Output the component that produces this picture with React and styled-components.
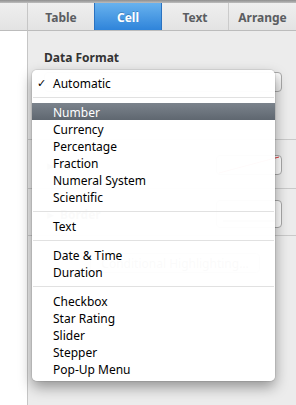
import React from 'react';
import styled, { createGlobalStyle, css } from 'styled-components';

const GlobalStyle = createGlobalStyle`
  html, body {
    margin: 0;
    padding: 0;
    height: 100%;
    overflow: hidden;
  }
  body {
    font-family: "Noto Sans", "DejaVu Sans", sans-serif;
    font-size: 12px;
    color: #000;
    background: #ececec;
  }
`;

const Window = styled.div`
  width: 296px;
  height: 405px;
  display: flex;
  flex-direction: column;
  background: #ececec;
`;

const TopStrip = styled.div`
  height: 3px;
  background: linear-gradient(to bottom, #8f8f8f, #bdbdbd);
`;

const Main = styled.div`
  flex: 1;
  display: grid;
  grid-template-columns: 28px 1fr;
  grid-template-rows: 28px 1fr;
`;

const Corner = styled.div`
  background: linear-gradient(to bottom, #efefef, #e3e3e3);
  border-right: 1px solid #c6c6c6;
  border-bottom: 1px solid #bcbcbc;
`;

const TabBar = styled.div`
  display: grid;
  grid-template-columns: repeat(4, 1fr);
  background: linear-gradient(to bottom, #efefef, #e3e3e3);
  border-bottom: 1px solid #bcbcbc;
`;

const Tab = styled.div`
  display: flex;
  align-items: center;
  justify-content: center;
  padding-top: 1px;
  font-weight: bold;
  font-size: 12px;
  color: #5b5d61;
  border-right: 1px solid #cbcbcb;
  &:last-child {
    border-right: none;
  }
  ${p =>
    p.$active &&
    css`
      color: #fff;
      background: linear-gradient(to bottom, #68b2ee, #2f84da);
      border-right: 1px solid #2a72c0;
      border-left: 1px solid #2a72c0;
      margin-left: -1px;
      text-shadow: 0 -1px 0 rgba(0, 0, 0, 0.2);
    `}
`;

const Canvas = styled.div`
  background: #fff;
  border-right: 1px solid #c6c6c6;
`;

const Inspector = styled.div`
  position: relative;
  background: #ececec;
  display: flex;
  flex-direction: column;
`;

const Section = styled.div`
  padding: 0 14px 0 16px;
  display: flex;
  flex-direction: column;
`;

const Heading = styled.div`
  font-weight: bold;
  color: #333;
  line-height: 16px;
  margin-top: 19px;
`;

const PopupButton = styled.div`
  margin-top: 6px;
  height: 18px;
  border: 1px solid #a9a9a9;
  border-radius: 4px;
  background: linear-gradient(to bottom, #fdfdfd, #ececec);
  margin-bottom: 47px;
`;

const Divider = styled.div`
  height: 1px;
  background: #c9c9c9;
`;

const DisclosureRow = styled.div`
  display: flex;
  align-items: center;
  height: ${p => p.$h}px;
  margin: ${p => p.$m};
  color: #333;
  font-weight: bold;
`;

const Arrow = styled.span`
  font-size: 9px;
  color: #666;
  width: 13px;
  margin-left: 3px;
`;

const Well = styled.div`
  margin-left: auto;
  width: 66px;
  height: 100%;
  box-sizing: border-box;
  border: 1px solid #a9a9a9;
  border-radius: 4px;
  background: #fff;
  overflow: hidden;
  svg {
    display: block;
  }
`;

const HighlightButton = styled.div`
  margin: 17px 0 0 46px;
  width: 170px;
  height: 20px;
  box-sizing: border-box;
  border: 1px solid #b0b0b0;
  border-radius: 4px;
  background: linear-gradient(to bottom, #fdfdfd, #eaeaea);
  color: #333;
  display: flex;
  align-items: center;
  justify-content: center;
`;

const Menu = styled.div`
  position: absolute;
  left: 4px;
  top: 39px;
  width: 243px;
  box-sizing: border-box;
  padding: 4px 0;
  background: rgba(255, 255, 255, 0.975);
  border-radius: 5px;
  box-shadow: 0 0 0 1px rgba(0, 0, 0, 0.07), 0 6px 14px rgba(0, 0, 0, 0.38);
`;

const Item = styled.div`
  display: flex;
  align-items: flex-start;
  height: 17px;
  box-sizing: border-box;
  padding-top: 3px;
  line-height: 14px;
  color: ${p => (p.$selected ? '#fff' : '#000')};
  background: ${p =>
    p.$selected ? 'linear-gradient(to bottom, #7b838c, #5f6770)' : 'transparent'};
`;

const CheckSlot = styled.span`
  width: 21px;
  padding-left: 5px;
  box-sizing: border-box;
  font-family: "DejaVu Sans", sans-serif;
  font-size: 11px;
  font-weight: bold;
`;

const Separator = styled.div`
  height: 12px;
  display: flex;
  align-items: center;
  padding: 0 1px;
  &::after {
    content: '';
    flex: 1;
    height: 1px;
    background: #e1e1e1;
  }
`;

const groups = [
  ['Automatic'],
  ['Number', 'Currency', 'Percentage', 'Fraction', 'Numeral System', 'Scientific'],
  ['Text'],
  ['Date & Time', 'Duration'],
  ['Checkbox', 'Star Rating', 'Slider', 'Stepper', 'Pop-Up Menu'],
];

function FormatMenu({ checked, selected }) {
  return (
    <Menu>
      {groups.map((group, i) => (
        <React.Fragment key={i}>
          {i > 0 && <Separator />}
          {group.map(label => (
            <Item key={label} $selected={label === selected}>
              <CheckSlot>{label === checked ? '✓' : ''}</CheckSlot>
              {label}
            </Item>
          ))}
        </React.Fragment>
      ))}
    </Menu>
  );
}

export default function App() {
  const tabs = ['Table', 'Cell', 'Text', 'Arrange'];
  return (
    <>
      <GlobalStyle />
      <Window>
        <TopStrip />
        <Main>
          <Corner />
          <TabBar>
            {tabs.map(t => (
              <Tab key={t} $active={t === 'Cell'}>
                {t}
              </Tab>
            ))}
          </TabBar>
          <Canvas />
          <Inspector>
            <Section>
              <Heading>Data Format</Heading>
              <PopupButton />
            </Section>
            <Divider />
            <Section>
              <DisclosureRow $h={20} $m="15px 0 13px">
                <Arrow>▶</Arrow>
                Fill
                <Well>
                  <svg width="64" height="18">
                    <line x1="2" y1="17" x2="62" y2="1" stroke="#e0383b" strokeWidth="1" />
                  </svg>
                </Well>
              </DisclosureRow>
            </Section>
            <Divider />
            <Section>
              <DisclosureRow $h={28} $m="11px 0 7px">
                <Arrow>▶</Arrow>
                Border
                <Well>
                  <svg width="64" height="26">
                    <line x1="6" y1="20" x2="58" y2="20" stroke="#555" strokeWidth="1" />
                  </svg>
                </Well>
              </DisclosureRow>
            </Section>
            <Divider />
            <Section>
              <HighlightButton>Conditional Highlighting…</HighlightButton>
            </Section>
            <FormatMenu checked="Automatic" selected="Number" />
          </Inspector>
        </Main>
      </Window>
    </>
  );
}
